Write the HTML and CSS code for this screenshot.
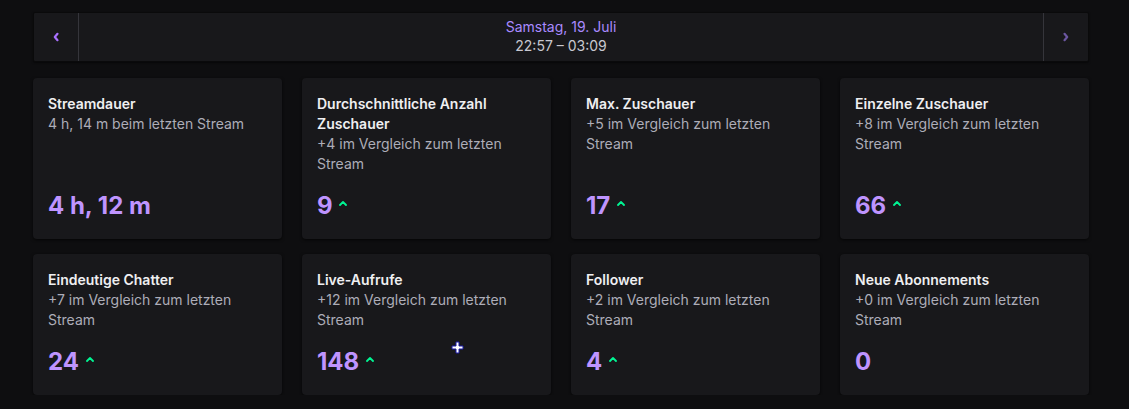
FILE: index.html
```html
<!DOCTYPE html>
<html lang="de">
<head>
<meta charset="utf-8">
<link rel="stylesheet" href="styles.css">
</head>
<body>
<div class="page">
  <div class="datebar">
    <button class="nav nav-prev" aria-label="Zurück">
      <svg width="8" height="10" viewBox="0 0 8 10"><path d="M5.5 1.8 L2.8 5 L5.5 8.2" fill="none" stroke="currentColor" stroke-width="2.2" stroke-linecap="round" stroke-linejoin="round"/></svg>
    </button>
    <div class="date">
      <div class="date-day">Samstag, 19. Juli</div>
      <div class="date-time">22:57 – 03:09</div>
    </div>
    <button class="nav nav-next" aria-label="Weiter">
      <svg width="8" height="10" viewBox="0 0 8 10"><path d="M2.5 1.8 L5.2 5 L2.5 8.2" fill="none" stroke="currentColor" stroke-width="2.2" stroke-linecap="round" stroke-linejoin="round"/></svg>
    </button>
  </div>

  <div class="grid">
    <div class="card">
      <div class="title">Streamdauer</div>
      <div class="sub">4 h, 14 m beim letzten Stream</div>
      <div class="value">4 h, 12 m</div>
    </div>
    <div class="card">
      <div class="title">Durchschnittliche Anzahl Zuschauer</div>
      <div class="sub">+4 im Vergleich zum letzten Stream</div>
      <div class="value">9 <span class="up"><svg width="8" height="5" viewBox="0 0 8 5"><path d="M1 4 L4 1 L7 4" fill="none" stroke="currentColor" stroke-width="1.8" stroke-linecap="round" stroke-linejoin="round"/></svg></span></div>
    </div>
    <div class="card">
      <div class="title">Max. Zuschauer</div>
      <div class="sub">+5 im Vergleich zum letzten Stream</div>
      <div class="value">17 <span class="up"><svg width="8" height="5" viewBox="0 0 8 5"><path d="M1 4 L4 1 L7 4" fill="none" stroke="currentColor" stroke-width="1.8" stroke-linecap="round" stroke-linejoin="round"/></svg></span></div>
    </div>
    <div class="card">
      <div class="title">Einzelne Zuschauer</div>
      <div class="sub">+8 im Vergleich zum letzten Stream</div>
      <div class="value">66 <span class="up"><svg width="8" height="5" viewBox="0 0 8 5"><path d="M1 4 L4 1 L7 4" fill="none" stroke="currentColor" stroke-width="1.8" stroke-linecap="round" stroke-linejoin="round"/></svg></span></div>
    </div>
    <div class="card">
      <div class="title">Eindeutige Chatter</div>
      <div class="sub">+7 im Vergleich zum letzten Stream</div>
      <div class="value">24 <span class="up"><svg width="8" height="5" viewBox="0 0 8 5"><path d="M1 4 L4 1 L7 4" fill="none" stroke="currentColor" stroke-width="1.8" stroke-linecap="round" stroke-linejoin="round"/></svg></span></div>
    </div>
    <div class="card">
      <div class="title">Live-Aufrufe</div>
      <div class="sub">+12 im Vergleich zum letzten Stream</div>
      <div class="value">148 <span class="up"><svg width="8" height="5" viewBox="0 0 8 5"><path d="M1 4 L4 1 L7 4" fill="none" stroke="currentColor" stroke-width="1.8" stroke-linecap="round" stroke-linejoin="round"/></svg></span></div>
      <svg class="cursor" width="13" height="13" viewBox="0 0 13 13"><path d="M5 1h3v4h4v3H8v4H5V8H1V5h4z" fill="#fff" stroke="#1a1aa8" stroke-width="1"/></svg>
    </div>
    <div class="card">
      <div class="title">Follower</div>
      <div class="sub">+2 im Vergleich zum letzten Stream</div>
      <div class="value">4 <span class="up"><svg width="8" height="5" viewBox="0 0 8 5"><path d="M1 4 L4 1 L7 4" fill="none" stroke="currentColor" stroke-width="1.8" stroke-linecap="round" stroke-linejoin="round"/></svg></span></div>
    </div>
    <div class="card">
      <div class="title">Neue Abonnements</div>
      <div class="sub">+0 im Vergleich zum letzten Stream</div>
      <div class="value">0</div>
    </div>
  </div>
</div>
</body>
</html>
```

FILE: styles.css
```css
* { box-sizing: border-box; }
html, body {
  margin: 0;
  background: #0e0e10;
}
body {
  font-family: Inter, "Noto Sans", "Liberation Sans", sans-serif;
  font-size: 14px;
  color: #efeff1;
}
.page {
  padding: 12px 40px 0 33px;
}
.datebar {
  display: flex;
  align-items: stretch;
  height: 50px;
  background: #18181b;
  border: 1px solid #0a0a0b;
  border-radius: 2px;
  box-shadow: 0 1px 2px rgba(0,0,0,0.5);
}
.nav {
  width: 45px;
  flex: 0 0 45px;
  background: transparent;
  border: 0;
  padding: 0;
  display: flex;
  align-items: center;
  justify-content: center;
  cursor: pointer;
}
.nav-prev {
  color: #a970ff;
  border-right: 1px solid #35353b;
}
.nav-next {
  color: #6b56a0;
  border-left: 1px solid #35353b;
}
.date {
  flex: 1;
  display: flex;
  flex-direction: column;
  align-items: center;
  justify-content: center;
  line-height: 19px;
  font-size: 14px;
  padding-bottom: 3px;
}
.date-day { color: #a98aff; }
.date-time { color: #c8c8d0; }

.grid {
  display: grid;
  grid-template-columns: repeat(4, 1fr);
  gap: 15px 20px;
  margin-top: 16px;
}
.card {
  position: relative;
  display: flex;
  flex-direction: column;
  background: #18181b;
  border-radius: 4px;
  padding: 16px 15px 18px;
  box-shadow: 0 1px 3px rgba(0,0,0,0.7);
}
.title {
  font-weight: 600;
  line-height: 20px;
  color: #efeff1;
}
.sub {
  line-height: 19.5px;
  color: #adadb8;
}
.value {
  margin-top: auto;
  padding-top: 18px;
  font-size: 24px;
  font-weight: 700;
  line-height: 30px;
  color: #bf94ff;
  display: flex;
  align-items: center;
  white-space: pre;
}
.up {
  display: inline-flex;
  color: #00f593;
  margin-left: 1px;
  margin-top: -5px;
}
.cursor {
  position: absolute;
  left: 149px;
  top: 87px;
}
```
